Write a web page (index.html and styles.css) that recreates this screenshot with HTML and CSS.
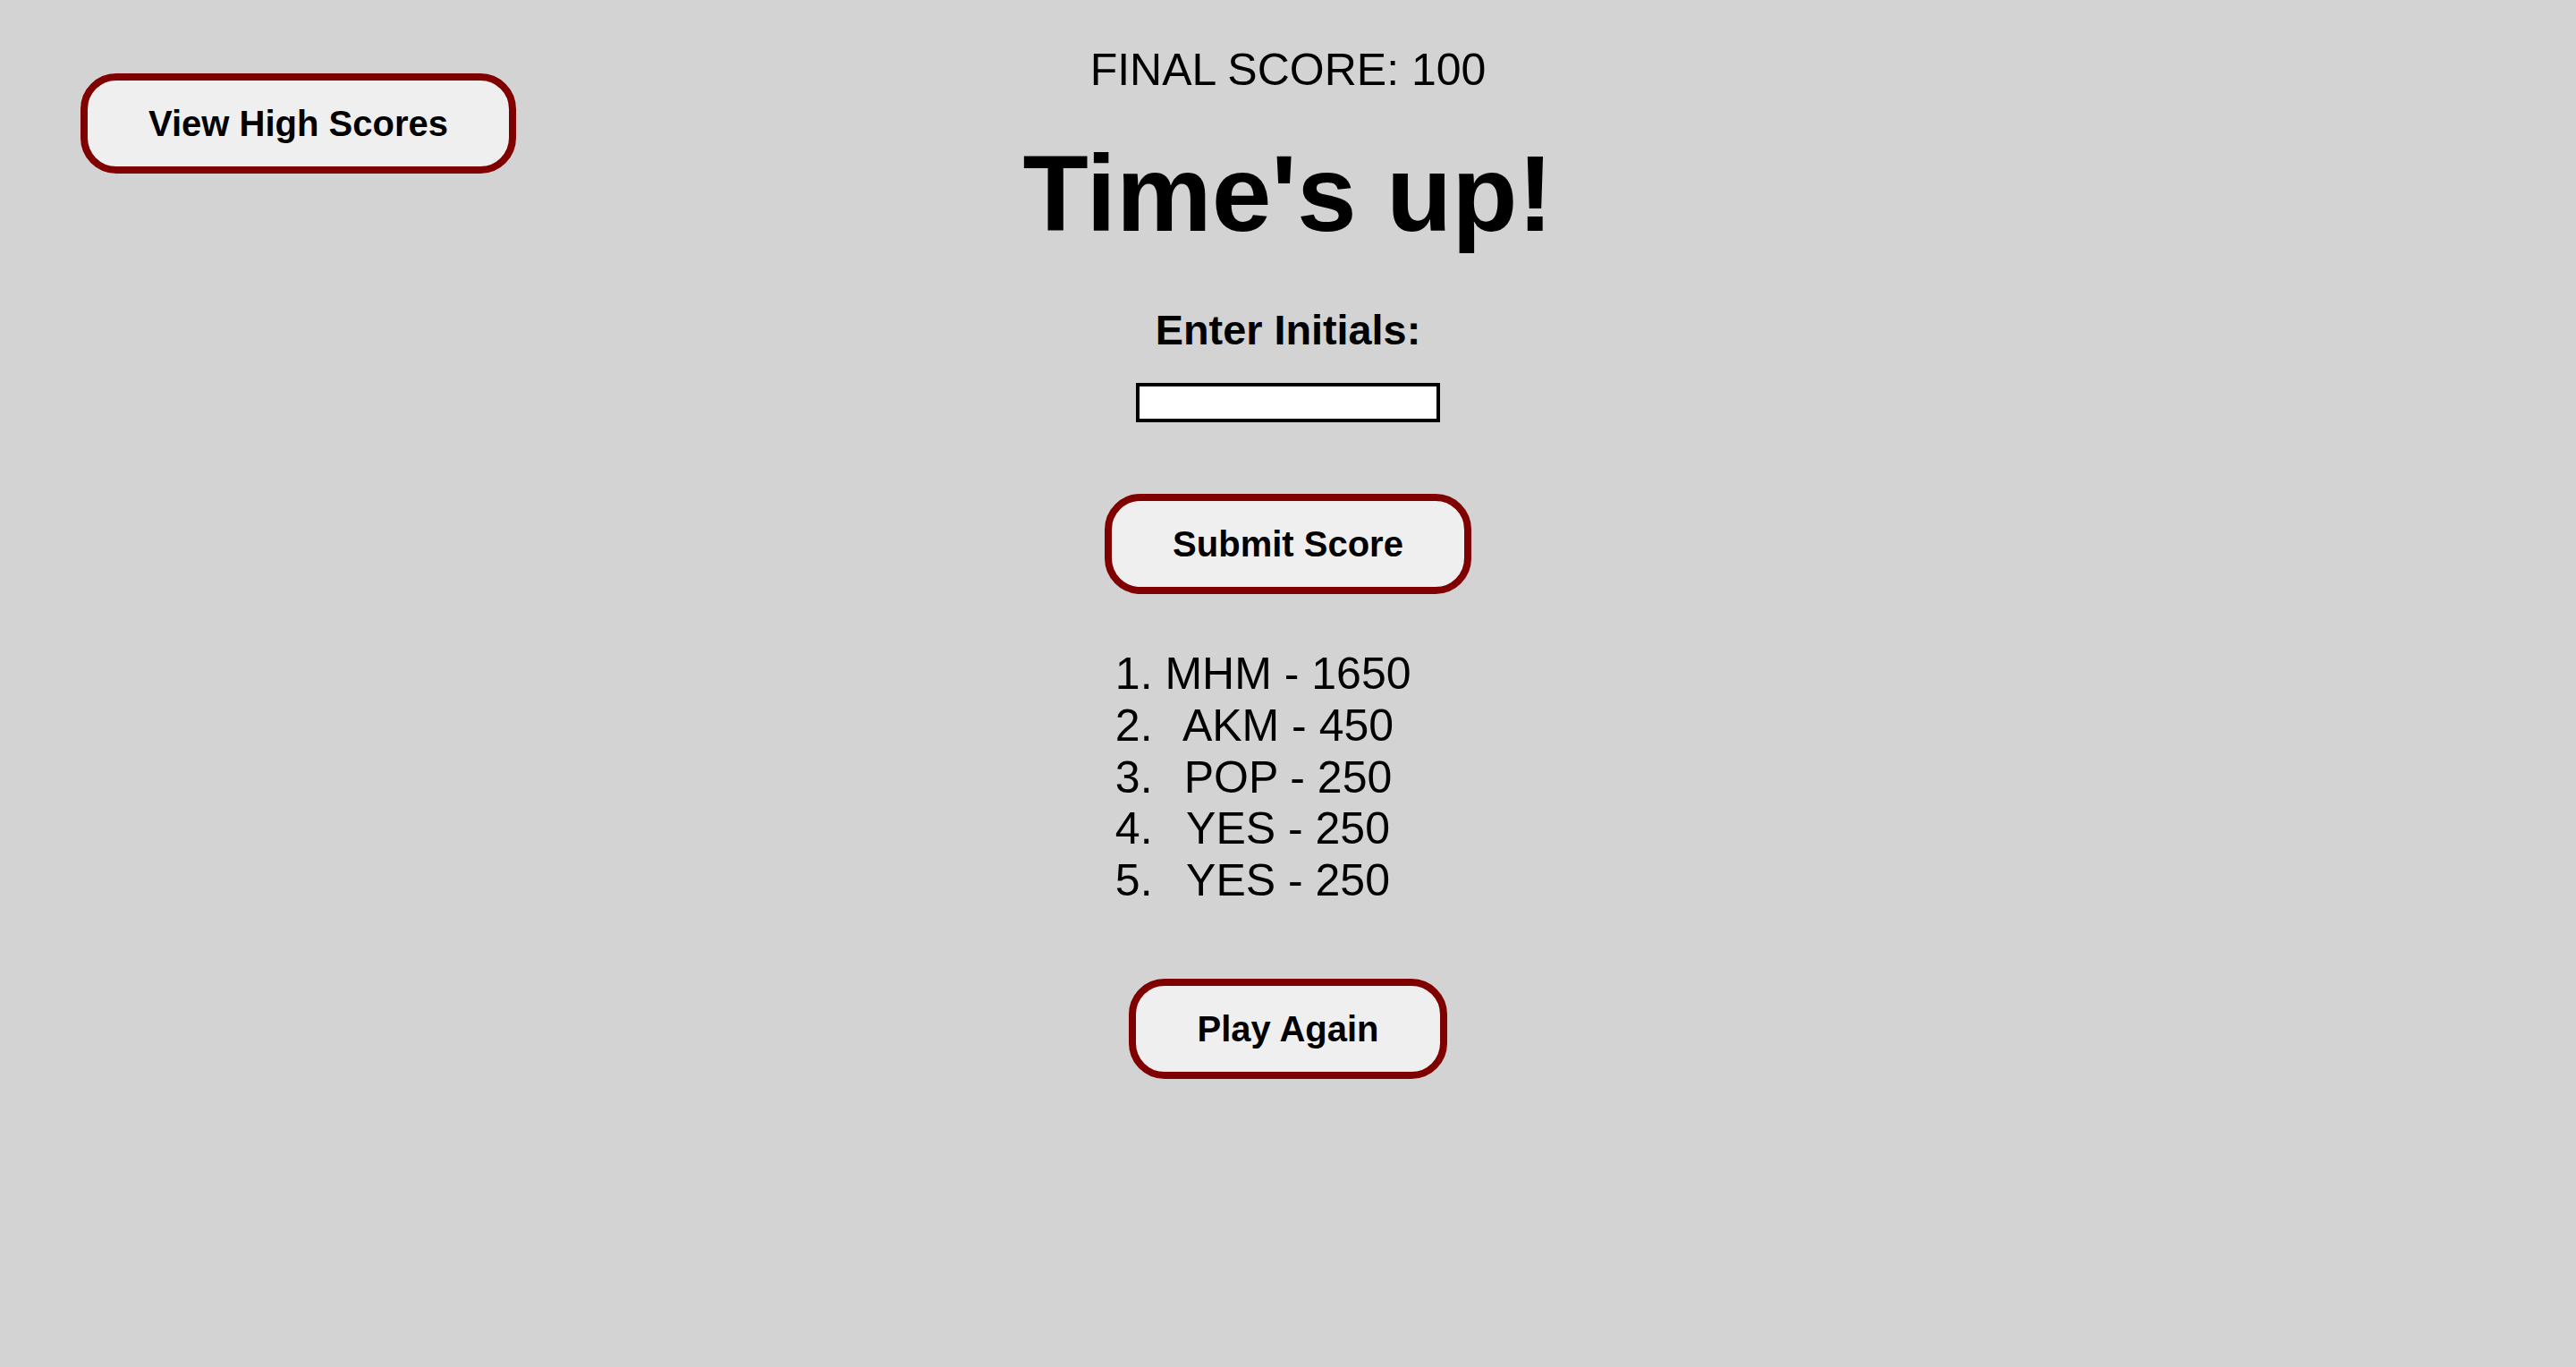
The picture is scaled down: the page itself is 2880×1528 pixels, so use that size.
FILE: index.html
```html
<!DOCTYPE html>
<html lang="en">
<head>
<meta charset="utf-8">
<title>Time's up!</title>
<link rel="stylesheet" href="styles.css">
</head>
<body>
<div class="page">
  <div class="side">
    <button class="btn btn-high" type="button">View High Scores</button>
  </div>
  <main class="main">
    <p class="final">FINAL SCORE: 100</p>
    <h1 class="title">Time's up!</h1>
    <label class="label" for="initials">Enter Initials:</label>
    <input class="initials" id="initials" type="text">
    <button class="btn btn-submit" type="button">Submit Score</button>
    <ol class="scores">
      <li>MHM - 1650</li>
      <li>AKM - 450</li>
      <li>POP - 250</li>
      <li>YES - 250</li>
      <li>YES - 250</li>
    </ol>
    <button class="btn btn-again" type="button">Play Again</button>
  </main>
  <div class="side"></div>
</div>
</body>
</html>
```

FILE: styles.css
```css
html, body {
  margin: 0;
  padding: 0;
  background: #d3d3d3;
  color: #000;
  font-family: "Liberation Sans", Arial, Helvetica, sans-serif;
}

.page {
  display: grid;
  grid-template-columns: 1fr auto 1fr;
  min-height: 1528px;
}

.side {
  display: flex;
  align-items: flex-start;
  padding: 82px 0 0 90px;
}

.main {
  display: flex;
  flex-direction: column;
  align-items: center;
  padding-top: 53px;
}

.final {
  margin: 0;
  font-size: 50px;
  line-height: 50px;
  font-weight: normal;
}

.title {
  margin: 53px 0 0;
  font-size: 120px;
  line-height: 120px;
  font-weight: bold;
}

.label {
  display: block;
  margin-top: 70px;
  font-size: 46.8px;
  line-height: 47px;
  font-weight: bold;
}

.initials {
  display: block;
  margin: 35px 0 0;
  width: 340px;
  height: 44px;
  box-sizing: border-box;
  border: 4px solid #000;
  background: #fff;
  padding: 0 4px;
  font-family: inherit;
  font-size: 26px;
}

.btn {
  display: block;
  margin: 0;
  padding: 25px 68px;
  border: 8px solid #800000;
  border-radius: 40px;
  background: #efefef;
  color: #000;
  font-family: "Liberation Sans", Arial, Helvetica, sans-serif;
  font-size: 40px;
  line-height: 46px;
  font-weight: bold;
  white-space: nowrap;
}

.btn-submit {
  margin-top: 80px;
}

.scores {
  margin: 61px 0 0;
  padding: 0;
  list-style: decimal outside;
  text-align: center;
  font-size: 50px;
  line-height: 57.75px;
}

.btn-again {
  margin-top: 80px;
}
```
